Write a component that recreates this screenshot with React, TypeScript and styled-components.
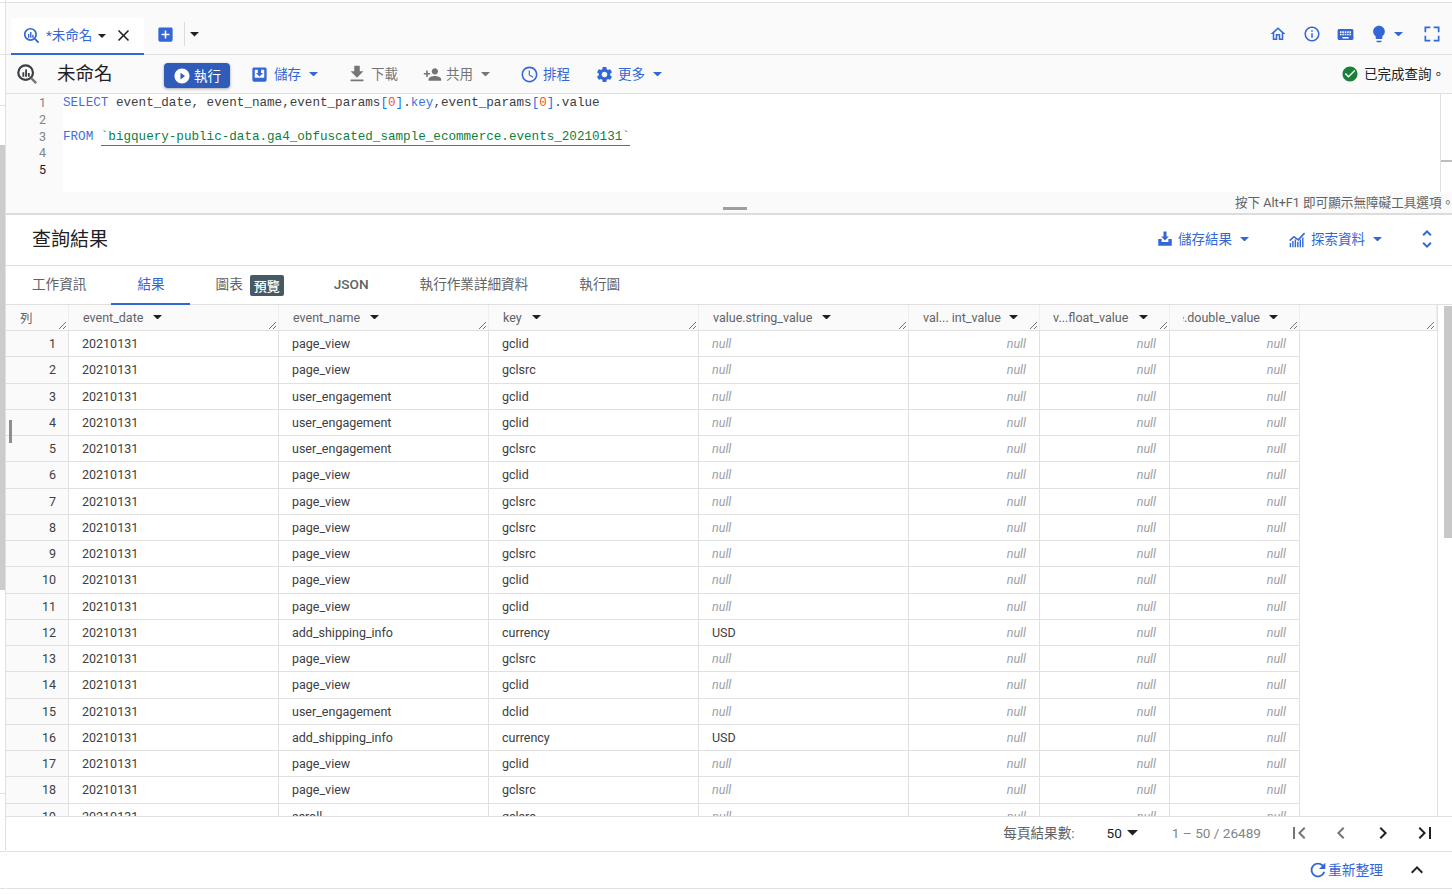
import React from "react";
import styled, { createGlobalStyle } from "styled-components";

const BLUE = "#3367d6";
const GRAY = "#757575";
const LINE = "#e0e0e0";

const Global = createGlobalStyle`
  html, body { margin: 0; padding: 0; height: 894px; overflow: hidden; background: #fff; }
  body { font-family: Roboto, "Noto Sans CJK TC", sans-serif; color: #3c4043; }
  * { box-sizing: border-box; }
`;

const Page = styled.div`
  position: relative;
  display: flex;
  width: 1452px;
  height: 894px;
`;
const Strip = styled.div`
  flex: 0 0 5px;
  height: 894px;
  background:
    linear-gradient(${LINE}, ${LINE}) 0 2px / 5px 1px no-repeat,
    linear-gradient(${LINE}, ${LINE}) 0 54px / 5px 1px no-repeat,
    linear-gradient(${LINE}, ${LINE}) 0 105px / 5px 1px no-repeat,
    linear-gradient(${LINE}, ${LINE}) 0 793px / 5px 1px no-repeat,
    linear-gradient(${LINE}, ${LINE}) 0 851px / 5px 1px no-repeat,
    linear-gradient(${LINE}, ${LINE}) 0 888px / 5px 1px no-repeat,
    linear-gradient(#cccccc, #cccccc) 0 145px / 5px 445px no-repeat,
    #fff;
`;
const Handle = styled.div`
  position: absolute;
  left: 9px;
  top: 420px;
  width: 3px;
  height: 23px;
  background: #8a8f96;
`;
const Main = styled.div`
  flex: 1;
  display: flex;
  flex-direction: column;
  min-width: 0;
  height: 894px;
`;
const TopLine = styled.div`
  height: 3px;
  border-bottom: 1px solid ${LINE};
  border-left: 1px solid ${LINE};
`;
const FramedTop = styled.div`
  display: flex;
  flex-direction: column;
  border-left: 1px solid ${LINE};
  height: 848px;
`;
const TabBar = styled.div`
  height: 52px;
  flex: none;
  display: flex;
  align-items: flex-end;
  background: #fafafa;
  border-bottom: 1px solid ${LINE};
  padding-left: 5px;
  padding-right: 10px;
`;
const QueryTab = styled.div`
  width: 133px;
  height: 37px;
  background: #fff;
  border-bottom: 2px solid ${BLUE};
  border-radius: 3px 3px 0 0;
  display: flex;
  align-items: center;
  padding-left: 12px;
  margin-bottom: -1px;
  color: ${BLUE};
  font-size: 13.5px;
`;
const TabTitle = styled.span`
  margin-left: 6px;
  margin-bottom: 4px;
  white-space: nowrap;
`;
const Icon = styled.svg<{ $w?: number; $ml?: number; $color?: string }>`
  flex: none;
  width: ${(p) => p.$w ?? 18}px;
  height: ${(p) => p.$w ?? 18}px;
  margin-left: ${(p) => p.$ml ?? 0}px;
  fill: ${(p) => p.$color ?? BLUE};
  display: block;
`;
const CaretSvg = styled.svg<{ $w?: number; $ml?: number; $color?: string }>`
  flex: none;
  width: ${(p) => p.$w ?? 9}px;
  height: ${(p) => (p.$w ?? 9) / 2}px;
  margin-left: ${(p) => p.$ml ?? 0}px;
  fill: ${(p) => p.$color ?? BLUE};
  display: block;
`;
const Caret = (p: { w?: number; ml?: number; color?: string }) => (
  <CaretSvg viewBox="0 0 10 5" $w={p.w} $ml={p.ml} $color={p.color}>
    <path d="M0 0h10L5 5z" />
  </CaretSvg>
);
const TabAdd = styled.div`
  display: flex;
  align-items: center;
  height: 36px;
  padding-bottom: 3px;
  margin-left: 12px;
`;
const VRule = styled.div`
  width: 1px;
  height: 24px;
  background: #dadce0;
  margin-left: 9px;
  margin-bottom: 2px;
`;
const Push = styled.div`
  flex: 1;
`;
const RightIcons = styled.div`
  display: flex;
  align-items: center;
  height: 36px;
  padding-bottom: 4px;
`;
const Toolbar = styled.div`
  height: 39px;
  flex: none;
  display: flex;
  align-items: center;
  background: #fafafa;
  border-bottom: 1px solid ${LINE};
  padding-left: 10px;
`;
const PageTitle = styled.div`
  margin-left: 19px;
  margin-bottom: 4px;
  width: 107px;
  font-size: 18.5px;
  color: #202124;
  white-space: nowrap;
`;
const RunButton = styled.div`
  width: 66px;
  height: 25px;
  display: flex;
  align-items: center;
  padding-left: 9px;
  background: #2f5cb8;
  color: #fff;
  font-size: 13.5px;
  border-radius: 4px;
  box-shadow: 0 1px 3px rgba(60, 64, 67, 0.45);
  margin-top: 3px;
`;
const RunLabel = styled.span`
  margin-left: 3px;
  margin-bottom: 2px;
  white-space: nowrap;
`;
const ToolLabel = styled.span<{ $muted?: boolean; $ml?: number }>`
  margin-left: ${(p) => p.$ml ?? 5}px;
  margin-bottom: 3px;
  font-size: 13.5px;
  color: ${(p) => (p.$muted ? GRAY : BLUE)};
  white-space: nowrap;
`;
const ToolItem = styled.div<{ $ml: number }>`
  display: flex;
  align-items: center;
  margin-left: ${(p) => p.$ml}px;
`;
const DoneStatus = styled.div`
  margin-left: auto;
  display: flex;
  align-items: center;
  padding-right: 7px;
  font-size: 13.5px;
  color: #202124;
  white-space: nowrap;
`;
const DoneText = styled.span`
  margin-left: 5px;
  margin-bottom: 3px;
`;
const Editor = styled.div`
  height: 98px;
  flex: none;
  display: flex;
`;
const Gutter = styled.div`
  flex: 0 0 57px;
  background: #fafafa;
  padding: 1px 17px 0 0;
  text-align: right;
  font-family: Roboto, sans-serif;
  font-size: 12.5px;
  line-height: 16.75px;
  color: #80868b;
`;
const LineNo = styled.div<{ $active?: boolean }>`
  color: ${(p) => (p.$active ? "#202124" : "#80868b")};
`;
const Code = styled.div`
  flex: 1;
  padding-top: 1px;
  font-family: "Liberation Mono", monospace;
  font-size: 12.6px;
  line-height: 16.75px;
  white-space: pre;
  color: #3c4043;
`;
const CodeLine = styled.div`
  height: 16.75px;
`;
const Kw = styled.span`
  color: #3f6fd8;
`;
const Punct = styled.span`
  color: #1a73e8;
`;
const Num = styled.span`
  color: #f4511e;
`;
const Str = styled.span`
  color: #0b8043;
  border-bottom: 1px solid #0f9d58;
  display: inline-block;
  line-height: 15px;
`;
const MiniMap = styled.div`
  position: relative;
  flex: 0 0 12px;
  border-left: 1px solid ${LINE};
`;
const MiniMark = styled.div`
  position: absolute;
  left: 0;
  right: 0;
  top: 66px;
  height: 2px;
  background: #bdbdbd;
`;
const StatusLine = styled.div`
  height: 21px;
  flex: none;
  background: #fafafa;
  font-size: 12.6px;
  line-height: 21px;
  color: #5f6368;
  padding-left: 1229px;
  white-space: nowrap;
  overflow: hidden;
`;
const SplitBar = styled.div`
  position: relative;
  height: 2px;
  flex: none;
  background: #dcdcdc;
`;
const SplitGrip = styled.div`
  position: absolute;
  left: 717px;
  top: -6px;
  width: 24px;
  height: 3px;
  background: #9e9e9e;
`;
const ResultsHead = styled.div`
  height: 51px;
  flex: none;
  display: flex;
  align-items: center;
  padding: 0 0 2px 26px;
  border-bottom: 1px solid ${LINE};
`;
const ResultsTitle = styled.div`
  font-size: 19px;
  color: #202124;
  margin-bottom: 4px;
`;
const TabsRow = styled.div`
  height: 39px;
  flex: none;
  display: flex;
  border-bottom: 1px solid ${LINE};
`;
const ResultTab = styled.div<{ $active?: boolean; $bold?: boolean }>`
  height: 39px;
  margin-bottom: -1px;
  display: flex;
  align-items: center;
  padding: 0 25px ${(p) => (p.$bold ? 2 : 4)}px ${(p) => (p.$bold ? 25 : 26)}px;
  font-size: 13.6px;
  font-weight: ${(p) => (p.$bold ? 500 : 400)};
  color: ${(p) => (p.$active ? BLUE : "#5f6368")};
  border-bottom: 2px solid ${(p) => (p.$active ? BLUE : "transparent")};
  white-space: nowrap;
`;
const PreviewBadge = styled.span`
  margin: 6px 0 0 7px;
  height: 21px;
  width: 34px;
  display: flex;
  align-items: center;
  justify-content: center;
  background: #455a64;
  color: #fff;
  border-radius: 2px;
  font-size: 13px;
  font-weight: 500;
`;
const TableArea = styled.div`
  height: 511px;
  flex: none;
  display: flex;
  overflow: hidden;
`;
const TableCol = styled.div`
  flex: 0 0 1432px;
  border-right: 1px solid ${LINE};
  overflow: hidden;
`;
const ScrollTrack = styled.div`
  flex: 1;
  padding: 1px 0 0 6px;
`;
const ScrollThumb = styled.div`
  height: 232px;
  background: #c8c8c8;
`;
const HeadRow = styled.div`
  height: 26px;
  display: grid;
  grid-template-columns: 63px 210px 210px 210px 210px 131px 130px 130px 137px;
  border-bottom: 1px solid ${LINE};
  background: #fafafa;
`;
const HeadCell = styled.div<{ $pl?: number }>`
  position: relative;
  display: flex;
  align-items: center;
  padding: 0 0 1px ${(p) => p.$pl ?? 14}px;
  font-size: 12.5px;
  color: #5f6368;
  border-right: 1px solid #eceff1;
  white-space: nowrap;
  overflow: hidden;
`;
const HeadClip = styled.div`
  flex: 0 0 77px;
  margin-left: -1px;
  overflow: hidden;
  display: flex;
  justify-content: flex-end;
`;
const ResizeMark = styled.svg`
  position: absolute;
  right: 1px;
  bottom: 0;
  width: 9px;
  height: 9px;
  stroke: #757575;
  stroke-width: 1;
  fill: none;
`;
const Resize = () => (
  <ResizeMark viewBox="0 0 9 9">
    <path d="M1 8 8 1M5 8 8 5" />
  </ResizeMark>
);
const DataRow = styled.div`
  height: 26.25px;
  width: 1294px;
  display: grid;
  grid-template-columns: 63px 210px 210px 210px 210px 131px 130px 130px;
  font-size: 12.5px;
  color: #3c4043;
`;
const Cell = styled.div<{ $right?: boolean }>`
  display: flex;
  align-items: center;
  justify-content: ${(p) => (p.$right ? "flex-end" : "flex-start")};
  padding: 0 13px;
  border-right: 1px solid ${LINE};
  border-bottom: 1px solid ${LINE};
  white-space: nowrap;
  overflow: hidden;
`;
const RowNum = styled(Cell)`
  justify-content: flex-end;
  padding-right: 12px;
  background: #fafafa;
`;
const Null = styled.i`
  color: #9aa0a6;
  font-style: italic;
`;
const Pager = styled.div`
  height: 36px;
  flex: none;
  display: flex;
  align-items: center;
  justify-content: flex-end;
  padding: 0 15px 2px 0;
  border-top: 1px solid ${LINE};
  border-bottom: 1px solid ${LINE};
  font-size: 13.6px;
`;
const PagerLabel = styled.span`
  color: #5f6368;
  margin-bottom: 2px;
`;
const PagerSize = styled.span`
  color: #202124;
  margin-left: 32px;
`;
const PagerRange = styled.span`
  color: #80868b;
  margin-left: 34px;
  margin-right: 26px;
`;
const RefreshRow = styled.div`
  height: 37px;
  flex: none;
  display: flex;
  align-items: center;
  justify-content: flex-end;
  border-bottom: 1px solid ${LINE};
  padding-right: 23px;
`;
const RefreshText = styled.span`
  font-size: 13.75px;
  color: ${BLUE};
  margin: 0 0 3px -1px;
`;

const P = {
  home: "M12 5.69l5 4.5V18h-2v-6H9v6H7v-7.81l5-4.5M12 3L2 12h3v8h6v-6h2v6h6v-8h3L12 3z",
  info: "M11 7h2v2h-2zm0 4h2v6h-2zm1-9C6.48 2 2 6.48 2 12s4.48 10 10 10 10-4.48 10-10S17.52 2 12 2zm0 18c-4.41 0-8-3.59-8-8s3.59-8 8-8 8 3.59 8 8-3.59 8-8 8z",
  keyboard:
    "M20 5H4c-1.1 0-1.99.9-1.99 2L2 17c0 1.1.9 2 2 2h16c1.1 0 2-.9 2-2V7c0-1.1-.9-2-2-2zm-9 3h2v2h-2V8zm0 3h2v2h-2v-2zM8 8h2v2H8V8zm0 3h2v2H8v-2zm-1 2H5v-2h2v2zm0-3H5V8h2v2zm9 7H8v-2h8v2zm0-4h-2v-2h2v2zm0-3h-2V8h2v2zm3 3h-2v-2h2v2zm0-3h-2V8h2v2z",
  bulb: "M9 21c0 .55.45 1 1 1h4c.55 0 1-.45 1-1v-1H9v1zm3-19C8.14 2 5 5.14 5 9c0 2.38 1.19 4.47 3 5.74V17c0 .55.45 1 1 1h6c.55 0 1-.45 1-1v-2.26c1.81-1.27 3-3.36 3-5.74 0-3.86-3.14-7-7-7z",
  full: "M5 14H3v7h7v-2H5v-5zm-2-4h2V5h5V3H3v7zm16 9h-5v2h7v-7h-2v5zM14 3v2h5v5h2V3h-7z",
  check:
    "M12 2C6.48 2 2 6.48 2 12s4.48 10 10 10 10-4.48 10-10S17.52 2 12 2zm-2 15l-5-5 1.41-1.41L10 14.17l7.59-7.59L19 8l-9 9z",
  play: "M12 2C6.48 2 2 6.48 2 12s4.48 10 10 10 10-4.48 10-10S17.52 2 12 2zm-2 14.5v-9l6 4.5-6 4.5z",
  download: "M19 9h-4V3H9v6H5l7 7 7-7zM5 18v2h14v-2H5z",
  share:
    "M15 12c2.21 0 4-1.79 4-4s-1.79-4-4-4-4 1.79-4 4 1.79 4 4 4zm-9-2V7H4v3H1v2h3v3h2v-3h3v-2H6zm9 4c-2.67 0-8 1.34-8 4v2h16v-2c0-2.66-5.33-4-8-4z",
  clock:
    "M11.99 2C6.47 2 2 6.48 2 12s4.47 10 9.99 10C17.52 22 22 17.52 22 12S17.52 2 11.99 2zM12 20c-4.42 0-8-3.58-8-8s3.58-8 8-8 8 3.58 8 8-3.58 8-8 8zm.5-13H11v6l5.25 3.15.75-1.23-4.5-2.67z",
  gear: "M19.14 12.94c.04-.3.06-.61.06-.94 0-.32-.02-.64-.07-.94l2.03-1.58c.18-.14.23-.41.12-.61l-1.92-3.32c-.12-.22-.37-.29-.59-.22l-2.39.96c-.5-.38-1.03-.7-1.62-.94l-.36-2.54c-.04-.24-.24-.41-.48-.41h-3.84c-.24 0-.43.17-.47.41l-.36 2.54c-.59.24-1.13.57-1.62.94l-2.39-.96c-.22-.08-.47 0-.59.22L2.74 8.87c-.12.21-.08.47.12.61l2.03 1.58c-.05.3-.09.63-.09.94s.02.64.07.94l-2.03 1.58c-.18.14-.23.41-.12.61l1.92 3.32c.12.22.37.29.59.22l2.39-.96c.5.38 1.03.7 1.62.94l.36 2.54c.05.24.24.41.48.41h3.84c.24 0 .44-.17.47-.41l.36-2.54c.59-.24 1.13-.56 1.62-.94l2.39.96c.22.08.47 0 .59-.22l1.92-3.32c.12-.22.07-.47-.12-.61l-2.01-1.58zM12 15.6c-1.98 0-3.6-1.62-3.6-3.6s1.62-3.6 3.6-3.6 3.6 1.62 3.6 3.6-1.62 3.6-3.6 3.6z",
  refresh:
    "M17.65 6.35C16.2 4.9 14.21 4 12 4c-4.42 0-7.99 3.58-7.99 8s3.57 8 7.99 8c3.73 0 6.84-2.55 7.73-6h-2.08c-.82 2.33-3.04 4-5.65 4-3.31 0-6-2.69-6-6s2.69-6 6-6c1.66 0 3.14.69 4.22 1.78L13 11h7V4l-2.35 2.35z",
  first: "M18.41 16.59L13.82 12l4.59-4.59L17 6l-6 6 6 6zM6 6h2v12H6z",
  prev: "M15.41 7.41L14 6l-6 6 6 6 1.41-1.41L10.83 12z",
  next: "M10 6L8.59 7.41 13.17 12l-4.58 4.59L10 18l6-6z",
  last: "M5.59 7.41L10.18 12l-4.59 4.59L7 18l6-6-6-6zM16 6h2v12h-2z",
  up: "M12 8l-6 6 1.41 1.41L12 10.83l4.59 4.58L18 14z",
  unfold:
    "M12 5.83L15.17 9l1.41-1.41L12 3 7.41 7.59 8.83 9 12 5.83zm0 12.34L8.83 15l-1.41 1.41L12 21l4.59-4.59L15.17 15 12 18.17z",
  close:
    "M19 6.41L17.59 5 12 10.59 6.41 5 5 6.41 10.59 12 5 17.59 6.41 19 12 13.41 17.59 19 19 17.59 13.41 12z",
  add: "M19 3H5c-1.11 0-2 .9-2 2v14c0 1.1.89 2 2 2h14c1.1 0 2-.9 2-2V5c0-1.1-.9-2-2-2zm-2 10h-4v4h-2v-4H7v-2h4V7h2v4h4v2z",
  saveBox:
    "M19 3H5c-1.1 0-2 .9-2 2v14c0 1.1.9 2 2 2h14c1.1 0 2-.9 2-2V5c0-1.1-.9-2-2-2zM6 6h4v4H7.5l4.5 4.5 4.5-4.5H14V6h4v10H6V6z",
  saveTray:
    "M14 2h-4v6.5H7l5 5.5 5-5.5h-3V2zM3 12h4.5v4h9v-4H21v9H3v-9z",
};

const Ico = ({ d, w, ml, color }: { d: string; w?: number; ml?: number; color?: string }) => (
  <Icon viewBox="0 0 24 24" $w={w} $ml={ml} $color={color}>
    <path d={d} fillRule="evenodd" />
  </Icon>
);

const QueryIcon = ({ w, ml, ring, handle }: { w: number; ml?: number; ring: string; handle: string }) => (
  <Icon viewBox="0 0 24 24" $w={w} $ml={ml} $color="none">
    <circle cx="10.5" cy="10.5" r="8" fill="none" stroke={ring} strokeWidth="2.4" />
    <path d="M7 10h2v5H7zM10 7h2v8h-2zM13 11h2v4h-2z" fill={ring} />
    <path d="M16.5 16.5 22 22" fill="none" stroke={handle} strokeWidth="2.6" />
  </Icon>
);

const ExploreIcon = ({ ml }: { ml?: number }) => (
  <Icon viewBox="0 0 24 24" $w={17} $ml={ml} $color={BLUE}>
    <path d="M1 13.5 7 8l6 4.5L22 3" fill="none" stroke={BLUE} strokeWidth="2.2" />
    <path d="M1 17h2v6H1zM4.5 14h2v9h-2zM8 12h2v11H8zM11.5 15h2v8h-2zM15 12h2v11h-2zM18.5 9h2v14h-2z" />
  </Icon>
);

type RowData = [string, string, string?];
const rows: RowData[] = [
  ["page_view", "gclid"],
  ["page_view", "gclsrc"],
  ["user_engagement", "gclid"],
  ["user_engagement", "gclid"],
  ["user_engagement", "gclsrc"],
  ["page_view", "gclid"],
  ["page_view", "gclsrc"],
  ["page_view", "gclsrc"],
  ["page_view", "gclsrc"],
  ["page_view", "gclid"],
  ["page_view", "gclid"],
  ["add_shipping_info", "currency", "USD"],
  ["page_view", "gclsrc"],
  ["page_view", "gclid"],
  ["user_engagement", "dclid"],
  ["add_shipping_info", "currency", "USD"],
  ["page_view", "gclid"],
  ["page_view", "gclsrc"],
  ["scroll", "gclsrc"],
];

const headCols = ["event_date", "event_name", "key", "value.string_value"];

export default function App() {
  return (
    <Page>
      <Global />
      <Strip />
      <Handle />
      <Main>
        <TopLine />
        <FramedTop>
          <TabBar>
            <QueryTab>
              <QueryIcon w={17} ring={BLUE} handle={BLUE} />
              <TabTitle>*未命名</TabTitle>
              <Caret w={8} ml={6} color="#202124" />
              <Ico d={P.close} w={19} ml={8} color="#202124" />
            </QueryTab>
            <TabAdd>
              <Ico d={P.add} w={19} color={BLUE} />
              <VRule />
              <Caret w={9} ml={5} color="#202124" />
            </TabAdd>
            <Push />
            <RightIcons>
              <Ico d={P.home} w={18} />
              <Ico d={P.info} w={18} ml={16} />
              <Ico d={P.keyboard} w={19} ml={15} />
              <Ico d={P.bulb} w={20} ml={14} />
              <Caret ml={5} />
              <Ico d={P.full} w={20} ml={19} />
            </RightIcons>
          </TabBar>
          <Toolbar>
            <QueryIcon w={22} ring="#3c4043" handle="#757575" />
            <PageTitle>未命名</PageTitle>
            <RunButton>
              <Ico d={P.play} w={18} color="#fff" />
              <RunLabel>執行</RunLabel>
            </RunButton>
            <ToolItem $ml={20}>
              <Ico d={P.saveBox} w={19} />
              <ToolLabel>儲存</ToolLabel>
              <Caret ml={8} />
            </ToolItem>
            <ToolItem $ml={28}>
              <Ico d={P.download} w={22} color={GRAY} />
              <ToolLabel $muted $ml={3}>
                下載
              </ToolLabel>
            </ToolItem>
            <ToolItem $ml={25}>
              <Ico d={P.share} w={19} color={GRAY} />
              <ToolLabel $muted $ml={4}>
                共用
              </ToolLabel>
              <Caret ml={8} color={GRAY} />
            </ToolItem>
            <ToolItem $ml={30}>
              <Ico d={P.clock} w={19} />
              <ToolLabel $ml={4}>排程</ToolLabel>
            </ToolItem>
            <ToolItem $ml={25}>
              <Ico d={P.gear} w={19} />
              <ToolLabel $ml={4}>更多</ToolLabel>
              <Caret ml={8} />
            </ToolItem>
            <DoneStatus>
              <Ico d={P.check} w={18} color="#188038" />
              <DoneText>已完成查詢。</DoneText>
            </DoneStatus>
          </Toolbar>
          <Editor>
            <Gutter>
              <LineNo>1</LineNo>
              <LineNo>2</LineNo>
              <LineNo>3</LineNo>
              <LineNo>4</LineNo>
              <LineNo $active>5</LineNo>
            </Gutter>
            <Code>
              <CodeLine>
                <Kw>SELECT</Kw> event_date, event_name,event_params<Punct>[</Punct>
                <Num>0</Num>
                <Punct>]</Punct>.<Kw>key</Kw>,event_params<Punct>[</Punct>
                <Num>0</Num>
                <Punct>]</Punct>.value
              </CodeLine>
              <CodeLine />
              <CodeLine>
                <Kw>FROM</Kw> <Str>`bigquery-public-data.ga4_obfuscated_sample_ecommerce.events_20210131`</Str>
              </CodeLine>
            </Code>
            <MiniMap>
              <MiniMark />
            </MiniMap>
          </Editor>
          <StatusLine>按下 Alt+F1 即可顯示無障礙工具選項。</StatusLine>
          <SplitBar>
            <SplitGrip />
          </SplitBar>
          <ResultsHead>
            <ResultsTitle>查詢結果</ResultsTitle>
            <ToolItem $ml={1048}>
              <Ico d={P.saveTray} w={18} />
              <ToolLabel $ml={4}>儲存結果</ToolLabel>
              <Caret ml={8} />
            </ToolItem>
            <ToolItem $ml={40}>
              <ExploreIcon />
              <ToolLabel>探索資料</ToolLabel>
              <Caret ml={8} />
            </ToolItem>
            <ToolItem $ml={33}>
              <Ico d={P.unfold} w={24} />
            </ToolItem>
          </ResultsHead>
          <TabsRow>
            <ResultTab>工作資訊</ResultTab>
            <ResultTab $active>結果</ResultTab>
            <ResultTab>
              圖表<PreviewBadge>預覽</PreviewBadge>
            </ResultTab>
            <ResultTab $bold>JSON</ResultTab>
            <ResultTab>執行作業詳細資料</ResultTab>
            <ResultTab>執行圖</ResultTab>
          </TabsRow>
          <TableArea>
            <TableCol>
              <HeadRow>
                <HeadCell>
                  列
                  <Resize />
                </HeadCell>
                {headCols.map((h) => (
                  <HeadCell key={h}>
                    {h}
                    <Caret ml={10} color="#202124" />
                    <Resize />
                  </HeadCell>
                ))}
                <HeadCell>
                  val... int_value
                  <Caret ml={8} color="#202124" />
                  <Resize />
                </HeadCell>
                <HeadCell $pl={13}>
                  v...float_value
                  <Caret ml={11} color="#202124" />
                  <Resize />
                </HeadCell>
                <HeadCell>
                  <HeadClip>
                    <span>value.double_value</span>
                  </HeadClip>
                  <Caret ml={9} color="#202124" />
                  <Resize />
                </HeadCell>
                <HeadCell>
                  <Resize />
                </HeadCell>
              </HeadRow>
              {rows.map((r, i) => (
                <DataRow key={i}>
                  <RowNum>{i + 1}</RowNum>
                  <Cell>20210131</Cell>
                  <Cell>{r[0]}</Cell>
                  <Cell>{r[1]}</Cell>
                  <Cell>{r[2] ?? <Null>null</Null>}</Cell>
                  <Cell $right>
                    <Null>null</Null>
                  </Cell>
                  <Cell $right>
                    <Null>null</Null>
                  </Cell>
                  <Cell $right>
                    <Null>null</Null>
                  </Cell>
                </DataRow>
              ))}
            </TableCol>
            <ScrollTrack>
              <ScrollThumb />
            </ScrollTrack>
          </TableArea>
          <Pager>
            <PagerLabel>每頁結果數:</PagerLabel>
            <PagerSize>50</PagerSize>
            <Caret w={11} ml={5} color="#202124" />
            <PagerRange>1 – 50 / 26489</PagerRange>
            <Ico d={P.first} w={24} color={GRAY} />
            <Ico d={P.prev} w={24} ml={18} color={GRAY} />
            <Ico d={P.next} w={24} ml={18} color="#202124" />
            <Ico d={P.last} w={24} ml={18} color="#202124" />
          </Pager>
          <RefreshRow>
            <Ico d={P.refresh} w={22} />
            <RefreshText>重新整理</RefreshText>
            <Ico d={P.up} w={24} ml={22} color="#202124" />
          </RefreshRow>
        </FramedTop>
      </Main>
    </Page>
  );
}
